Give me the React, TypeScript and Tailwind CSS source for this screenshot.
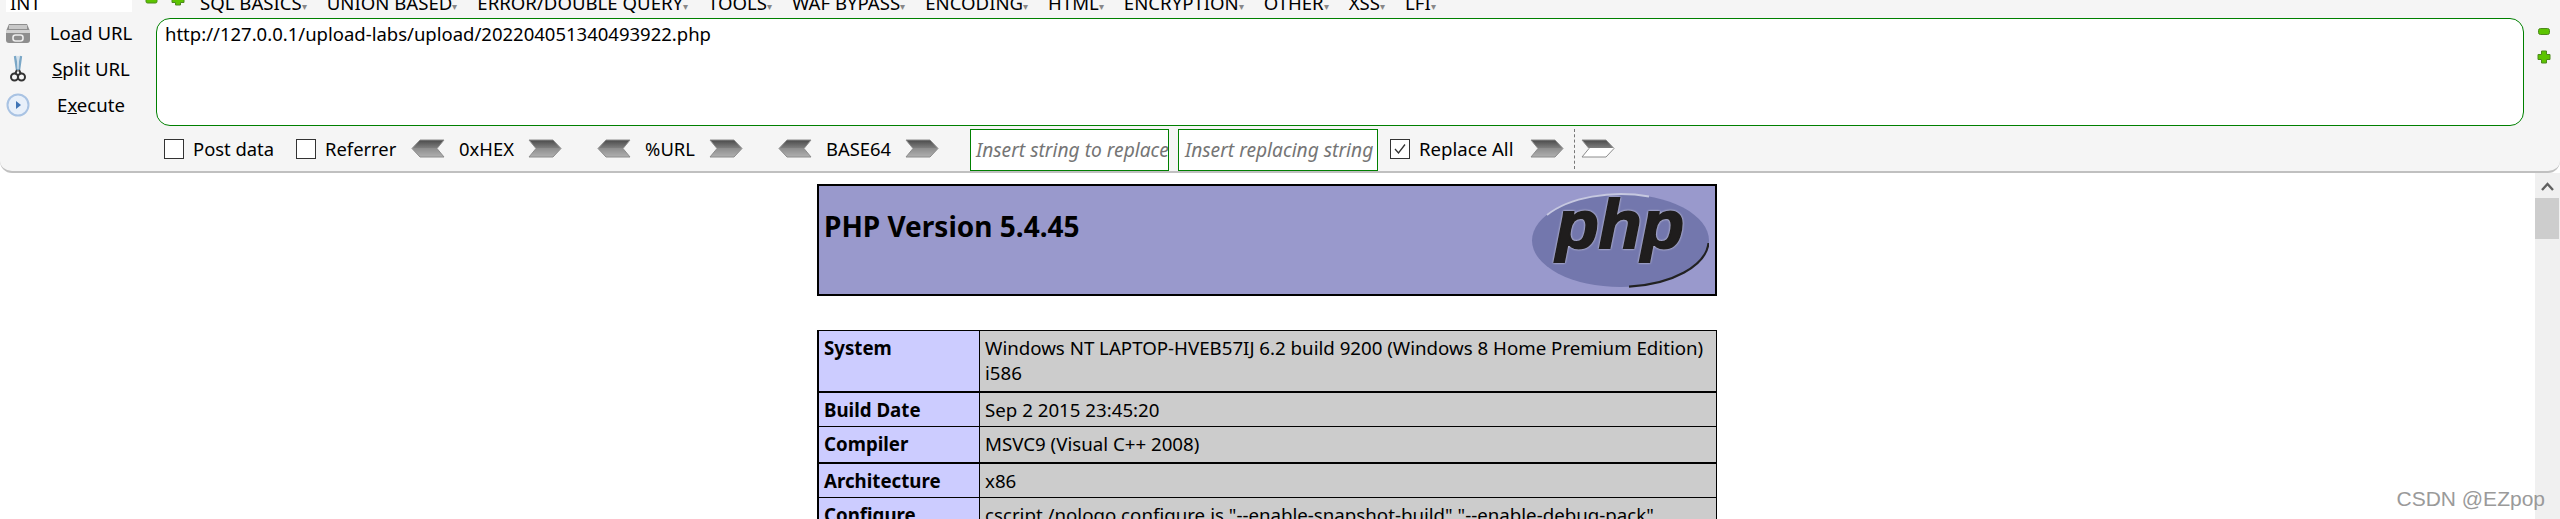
const font = { fontFamily: '"Noto Sans","Liberation Sans",sans-serif' };

function Chevron({ dir, hollow }: { dir: "l" | "r"; hollow?: boolean }) {
  const id = (dir === "l" ? "cl" : "cr") + (hollow ? "h" : "");
  const points = dir === "r" ? "1,1 25,1 33,9.5 25,18 1,18 8,9.5" : "33,1 9,1 1,9.5 9,18 33,18 26,9.5";
  return (
    <svg width="34" height="19" viewBox="0 0 34 19" className="shrink-0">
      <defs>
        <linearGradient id={id} x1="0" y1="0" x2="0" y2="1">
          <stop offset="0" stopColor="#4a4a4a" />
          <stop offset="0.45" stopColor="#7c7c7c" />
          <stop offset="0.5" stopColor={hollow ? "#ffffff" : "#8e8e8e"} />
          <stop offset="1" stopColor={hollow ? "#ffffff" : "#b0b0b0"} />
        </linearGradient>
      </defs>
      <polygon points={points} fill={`url(#${id})`} stroke="#8c8c8c" strokeWidth="1" />
    </svg>
  );
}

function Check({ checked }: { checked?: boolean }) {
  return (
    <span className="flex h-[20px] w-[20px] shrink-0 items-center justify-center border border-[#333333] bg-white">
      {checked && (
        <svg width="14" height="12" viewBox="0 0 14 12">
          <path d="M2 6 L5.5 10 L12 1.5" fill="none" stroke="#333333" strokeWidth="1.3" />
        </svg>
      )}
    </span>
  );
}

function SideItem({ icon, u, pre, post }: { icon: React.ReactNode; u: string; pre: string; post: string }) {
  return (
    <div className="flex h-[36px] items-center">
      <div className="flex w-[36px] justify-center">{icon}</div>
      <div className="w-[110px] text-center text-[18.6px] text-black">
        {pre}
        <span className="underline">{u}</span>
        {post}
      </div>
    </div>
  );
}

function Row({ k, v, h, thick }: { k: string; v: React.ReactNode; h: string; thick?: boolean }) {
  return (
    <div className={`flex ${h} ${thick ? "border-t-2" : "border-t"} border-black`}>
      <div className="w-[161px] shrink-0 border-r border-black bg-[#ccccff] pt-[4px] pl-[5px] text-[18.7px] leading-[25px] font-bold text-black">{k}</div>
      <div className="flex-1 bg-[#cccccc] pt-[4px] pl-[5px] text-[18.7px] leading-[25px] text-black">{v}</div>
    </div>
  );
}

export default function App() {
  const menu = ["SQL BASICS", "UNION BASED", "ERROR/DOUBLE QUERY", "TOOLS", "WAF BYPASS", "ENCODING", "HTML", "ENCRYPTION", "OTHER", "XSS", "LFI"];
  return (
    <div className="relative h-[519px] w-[2560px] overflow-hidden bg-white" style={font}>
      <div className="flex h-[173px] flex-col overflow-hidden rounded-b-[12px] border-b-2 border-[#c0c0c0] bg-[#f5f5f5]">
        <div className="flex h-[18px] shrink-0 items-start overflow-hidden">
          <div className="ml-[6px] h-[12px] w-[126px] overflow-hidden bg-white pl-[4px] text-[18.6px] leading-[5px] text-black">INT</div>
          <svg width="40" height="12" viewBox="0 0 40 12" className="ml-[13px] shrink-0">
            <rect x="1" y="-3" width="11" height="6" rx="1.5" fill="#5cc400" stroke="#4d8a1c" />
            <path d="M30.5 -5 H35.5 V-2.5 H39 V2.5 H35.5 V5 H30.5 V2.5 H27 V-2.5 H30.5 Z" fill="#5cc400" stroke="#4d8a1c" />
          </svg>
          <div className="ml-[15px] flex gap-[20px] text-[18.6px] leading-[6px] whitespace-nowrap text-black">
            {menu.map((m) => (
              <span key={m}>
                {m}
                <span className="text-[10px] text-[#888888]">▾</span>
              </span>
            ))}
          </div>
        </div>
        <div className="flex h-[108px] shrink-0">
          <div className="-mt-[3px] w-[156px] shrink-0">
            <SideItem
              pre="Lo"
              u="a"
              post="d URL"
              icon={
                <svg width="26" height="22" viewBox="0 0 26 22">
                  <path d="M4 2 H22 L25 9 V18 Q25 21 22 21 H4 Q1 21 1 18 V9 Z" fill="#8e8e8e" />
                  <rect x="4" y="3" width="18" height="4" fill="#c8c8c8" />
                  <rect x="1" y="8" width="24" height="3" fill="#d2d2d2" />
                  <rect x="8" y="13" width="10" height="6" rx="2.5" fill="none" stroke="#eeeeee" strokeWidth="1.6" />
                </svg>
              }
            />
            <SideItem
              pre=""
              u="S"
              post="plit URL"
              icon={
                <svg width="16" height="28" viewBox="0 0 16 28">
                  <path d="M5 1 L7 15 M11 1 L9 15" stroke="#7aa7c7" strokeWidth="2.4" fill="none" />
                  <path d="M8 1 V14" stroke="#c9dbe8" strokeWidth="1.5" />
                  <circle cx="4.5" cy="22" r="3.5" fill="none" stroke="#333333" strokeWidth="2" />
                  <circle cx="11.5" cy="22" r="3.5" fill="none" stroke="#333333" strokeWidth="2" />
                  <path d="M7 15 L5 19 M9 15 L11 19" stroke="#333333" strokeWidth="2" />
                </svg>
              }
            />
            <SideItem
              pre="E"
              u="x"
              post="ecute"
              icon={
                <svg width="24" height="24" viewBox="0 0 24 24">
                  <circle cx="12" cy="12" r="10.5" fill="#e8f0fa" stroke="#a9c3e3" strokeWidth="2" />
                  <path d="M10 8 L15 12 L10 16 Z" fill="#3f74b5" />
                </svg>
              }
            />
          </div>
          <div className="flex-1 rounded-[14px] border border-[#008000] bg-white pt-[2px] pl-[8px] text-[18.5px] leading-[25px] text-black">
            http://127.0.0.1/upload-labs/upload/202204051340493922.php
          </div>
          <div className="flex w-[36px] shrink-0 flex-col items-start pt-[8px] pl-[13px]">
            <svg width="14" height="38" viewBox="0 0 14 38">
              <rect x="1.5" y="2.5" width="11" height="6" rx="2" fill="#5cc400" stroke="#4d8a1c" />
              <path d="M4.5 25 H9.5 V28.5 H13 V33.5 H9.5 V37 H4.5 V33.5 H1 V28.5 H4.5 Z" fill="#5cc400" stroke="#4d8a1c" />
            </svg>
          </div>
        </div>
        <div className="flex h-[45px] shrink-0 items-center pl-[164px] text-[18.4px] whitespace-nowrap text-black">
          <Check />
          <span className="ml-[9px] w-[103px]">Post data</span>
          <Check />
          <span className="ml-[9px] w-[86px]">Referrer</span>
          <Chevron dir="l" />
          <span className="w-[83px] text-center">0xHEX</span>
          <Chevron dir="r" />
          <span className="w-[35px]" />
          <Chevron dir="l" />
          <span className="w-[78px] text-center">%URL</span>
          <Chevron dir="r" />
          <span className="w-[35px]" />
          <Chevron dir="l" />
          <span className="w-[93px] text-center">BASE64</span>
          <Chevron dir="r" />
          <div className="ml-[31px] flex h-[42px] w-[199px] items-center self-end overflow-hidden border border-[#008000] bg-white pl-[5px] text-[19.2px] text-[#757575] italic">Insert string to replace</div>
          <div className="ml-[9px] flex h-[42px] w-[200px] items-center self-end overflow-hidden border border-[#008000] bg-white pl-[6px] text-[19.2px] text-[#757575] italic">Insert replacing string</div>
          <span className="ml-[12px]"><Check checked /></span>
          <span className="ml-[9px] w-[111px] text-[18.6px]">Replace All</span>
          <Chevron dir="r" />
          <span className="ml-[10px] h-[40px] border-l border-dashed border-[#777777]" />
          <span className="ml-[6px]"><Chevron dir="r" hollow /></span>
        </div>
      </div>

      <div className="mt-[11px] ml-[817px] w-[900px]">
        <div className="flex h-[112px] items-start justify-between border-2 border-black bg-[#9999cc]">
          <h1 className="pt-[20px] pl-[5px] text-[28px] leading-[40px] font-bold text-black">PHP Version 5.4.45</h1>
          <svg width="180" height="96" viewBox="0 0 180 96" className="mt-[7px] mr-[6px]">
            <ellipse cx="91.5" cy="47.5" rx="88.5" ry="46.5" fill="#7377ad" />
            <path d="M18 22 A88.5 46.5 0 0 1 120 3.5" fill="none" stroke="#c6c8e0" strokeWidth="1.8" />
            <path d="M179.5 50 A88.5 46.5 0 0 1 100 93.6" fill="none" stroke="#222222" strokeWidth="2.2" />
            <text
              x="27"
              y="55"
              textLength="128"
              lengthAdjust="spacingAndGlyphs"
              fontFamily="Liberation Sans"
              fontWeight="700"
              fontStyle="italic"
              fontSize="68"
              fill="#1f1d1d"
              stroke="#1f1d1d"
              strokeWidth="2"
              className="drop-shadow-[0_0_1px_#e4e4f0]"
            >
              php
            </text>
          </svg>
        </div>
        <div className="mt-[34px] border-r border-l-2 border-black">
          <Row
            k="System"
            h="h-[61px]"
            v={<>Windows NT LAPTOP-HVEB57IJ 6.2 build 9200 (Windows 8 Home Premium Edition)<br />i586</>}
          />
          <Row k="Build Date" h="h-[35px]" thick v="Sep 2 2015 23:45:20" />
          <Row k="Compiler" h="h-[36px]" v="MSVC9 (Visual C++ 2008)" />
          <Row k="Architecture" h="h-[35px]" thick v="x86" />
          <Row k="Configure" h="h-[60px]" v={'cscript /nologo configure.js "--enable-snapshot-build" "--enable-debug-pack"'} />
        </div>
      </div>

      <div className="absolute top-[173px] right-0 bottom-0 flex w-[25px] flex-col items-start bg-[#f0f0f0]">
        <svg width="24" height="25" viewBox="0 0 24 25" className="shrink-0">
          <path d="M7 17 L12.5 11 L18 17" fill="none" stroke="#606060" strokeWidth="2.4" />
        </svg>
        <div className="h-[41px] w-[24px] bg-[#cdcdcd]" />
      </div>
      <div className="absolute top-[486px] right-[15px] text-[21px] leading-[26px] text-[#9a9a9a]" style={{ fontFamily: '"Liberation Sans",sans-serif' }}>CSDN @EZpop</div>
    </div>
  );
}
